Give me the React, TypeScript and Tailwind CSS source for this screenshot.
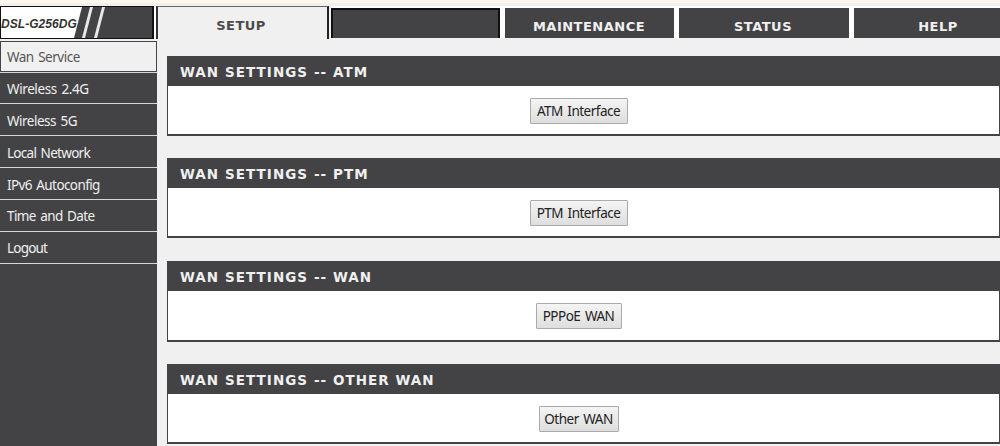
const menuItems = [
  { label: "Wireless 2.4G", className: "h-[30px] pt-[2px] tracking-[-0.4px]" },
  { label: "Wireless 5G", className: "h-[31px] pt-[3px] tracking-[-0.5px]" },
  { label: "Local Network", className: "h-[31px] pt-[3px] tracking-[-0.7px]" },
  { label: "IPv6 Autoconfig", className: "h-[31px] pt-[3px] tracking-[-0.6px]" },
  { label: "Time and Date", className: "h-[31px] pt-[2px] tracking-[-0.6px]" },
  { label: "Logout", className: "h-[31px] pt-[2px] tracking-[-0.8px]" },
];

const panels = [
  { title: "WAN SETTINGS -- ATM", button: "ATM Interface", className: "mb-[22px] h-[80px]", width: "w-[98px]" },
  { title: "WAN SETTINGS -- PTM", button: "PTM Interface", className: "mb-[23px] h-[80px]", width: "w-[98px]" },
  { title: "WAN SETTINGS -- WAN", button: "PPPoE WAN", className: "mb-[22px] h-[81px]", width: "w-[86px]" },
  { title: "WAN SETTINGS -- OTHER WAN", button: "Other WAN", className: "h-[80px]", width: "w-[80px]" },
];

function Logo() {
  return (
    <div className="relative h-[33px] w-[154px] shrink-0 border border-r-2 border-[#111] bg-white">
      <svg className="absolute inset-0" width="151" height="31" viewBox="0 0 151 31">
        <path d="M81 0H151V31H73Z" fill="#434345" />
        <path d="M89 0H92L84 31H81Z" fill="#e8e8e8" />
        <path d="M101 0H104L96 31H93Z" fill="#e8e8e8" />
      </svg>
      <span className="absolute left-0 top-[9px] font-['Liberation_Sans'] text-[12px] font-bold italic leading-4 tracking-[0.05px] text-[#333]">
        DSL-G256DG
      </span>
    </div>
  );
}

function Tabs() {
  return (
    <nav className="flex h-[33px] shrink-0 font-['DejaVu_Sans'] text-[13px] font-bold leading-[20px] tracking-[0.5px]">
      <div className="mr-[2px] h-[33px] w-[173px] border-x-2 border-t border-l-[#333] border-r-[#222] border-t-[#666] bg-[#f0f0f0] pr-[3px] pt-[9px] text-center text-[#4b4b4b]">
        SETUP
      </div>
      <div className="flex h-8 gap-[5px] bg-white pt-[2px]">
        <div className="w-[169px] border-2 border-b-0 border-[#111] bg-[#434345]"></div>
        <div className="w-[169px] bg-[#434345] pr-[1px] pt-[9px] text-center text-[#f0f0f0]">MAINTENANCE</div>
        <div className="w-[170px] bg-[#434345] pr-[2px] pt-[9px] text-center text-[#f0f0f0]">STATUS</div>
        <div className="w-[171px] bg-[#434345] pr-[3px] pt-[9px] text-center text-[#f0f0f0]">HELP</div>
      </div>
    </nav>
  );
}

function Sidebar() {
  return (
    <aside className="w-[157px] shrink-0 bg-[#434345] text-[13.5px] text-[#f0f0f0] [word-spacing:1.5px]">
      <div className="flex h-[31px] items-center border border-[#444] bg-[#f0f0f0] pl-[6px] pt-[2px] tracking-[-0.5px] text-[#555]">
        Wan Service
      </div>
      {menuItems.map((item) => (
        <div key={item.label} className="border-t border-[#d8d8d8]">
          <div className={`flex items-center pl-[7px] ${item.className}`}>{item.label}</div>
        </div>
      ))}
      <div className="border-t border-[#d8d8d8]"></div>
    </aside>
  );
}

export default function App() {
  return (
    <div className="flex h-[446px] w-[1000px] flex-col overflow-hidden bg-[#f0f0f0] font-['Noto_Sans',sans-serif]">
      <div className="h-[3px] shrink-0 bg-[#fff8ec]"></div>
      <header className="mt-[3px] flex h-[33px] shrink-0 overflow-hidden">
        <Logo />
        <div className="w-[2px] shrink-0 bg-white"></div>
        <Tabs />
      </header>
      <div className="flex min-h-0 flex-1 pt-[2px]">
        <Sidebar />
        <main className="ml-[10px] flex-1 pt-[15px]">
          {panels.map((panel) => (
            <section key={panel.title} className={`flex flex-col border-x border-b-2 border-[#434345] bg-white ${panel.className}`}>
              <h2 className="h-[30px] shrink-0 bg-[#434345] pl-[12px] font-['DejaVu_Sans'] text-[13.5px] font-bold leading-[32px] tracking-[1.05px] text-[#f0f0f0]">
                {panel.title}
              </h2>
              <div className="flex flex-1 items-center justify-center pr-[10px] pt-[1px]">
                <button className={`h-[26px] whitespace-nowrap rounded-[1px] border border-[#aaa] bg-linear-to-b from-[#f4f4f4] to-[#dedede] pt-[2px] text-[13.5px] leading-none tracking-[-0.5px] text-[#222] [word-spacing:1.5px] ${panel.width}`}>
                  {panel.button}
                </button>
              </div>
            </section>
          ))}
        </main>
      </div>
    </div>
  );
}
